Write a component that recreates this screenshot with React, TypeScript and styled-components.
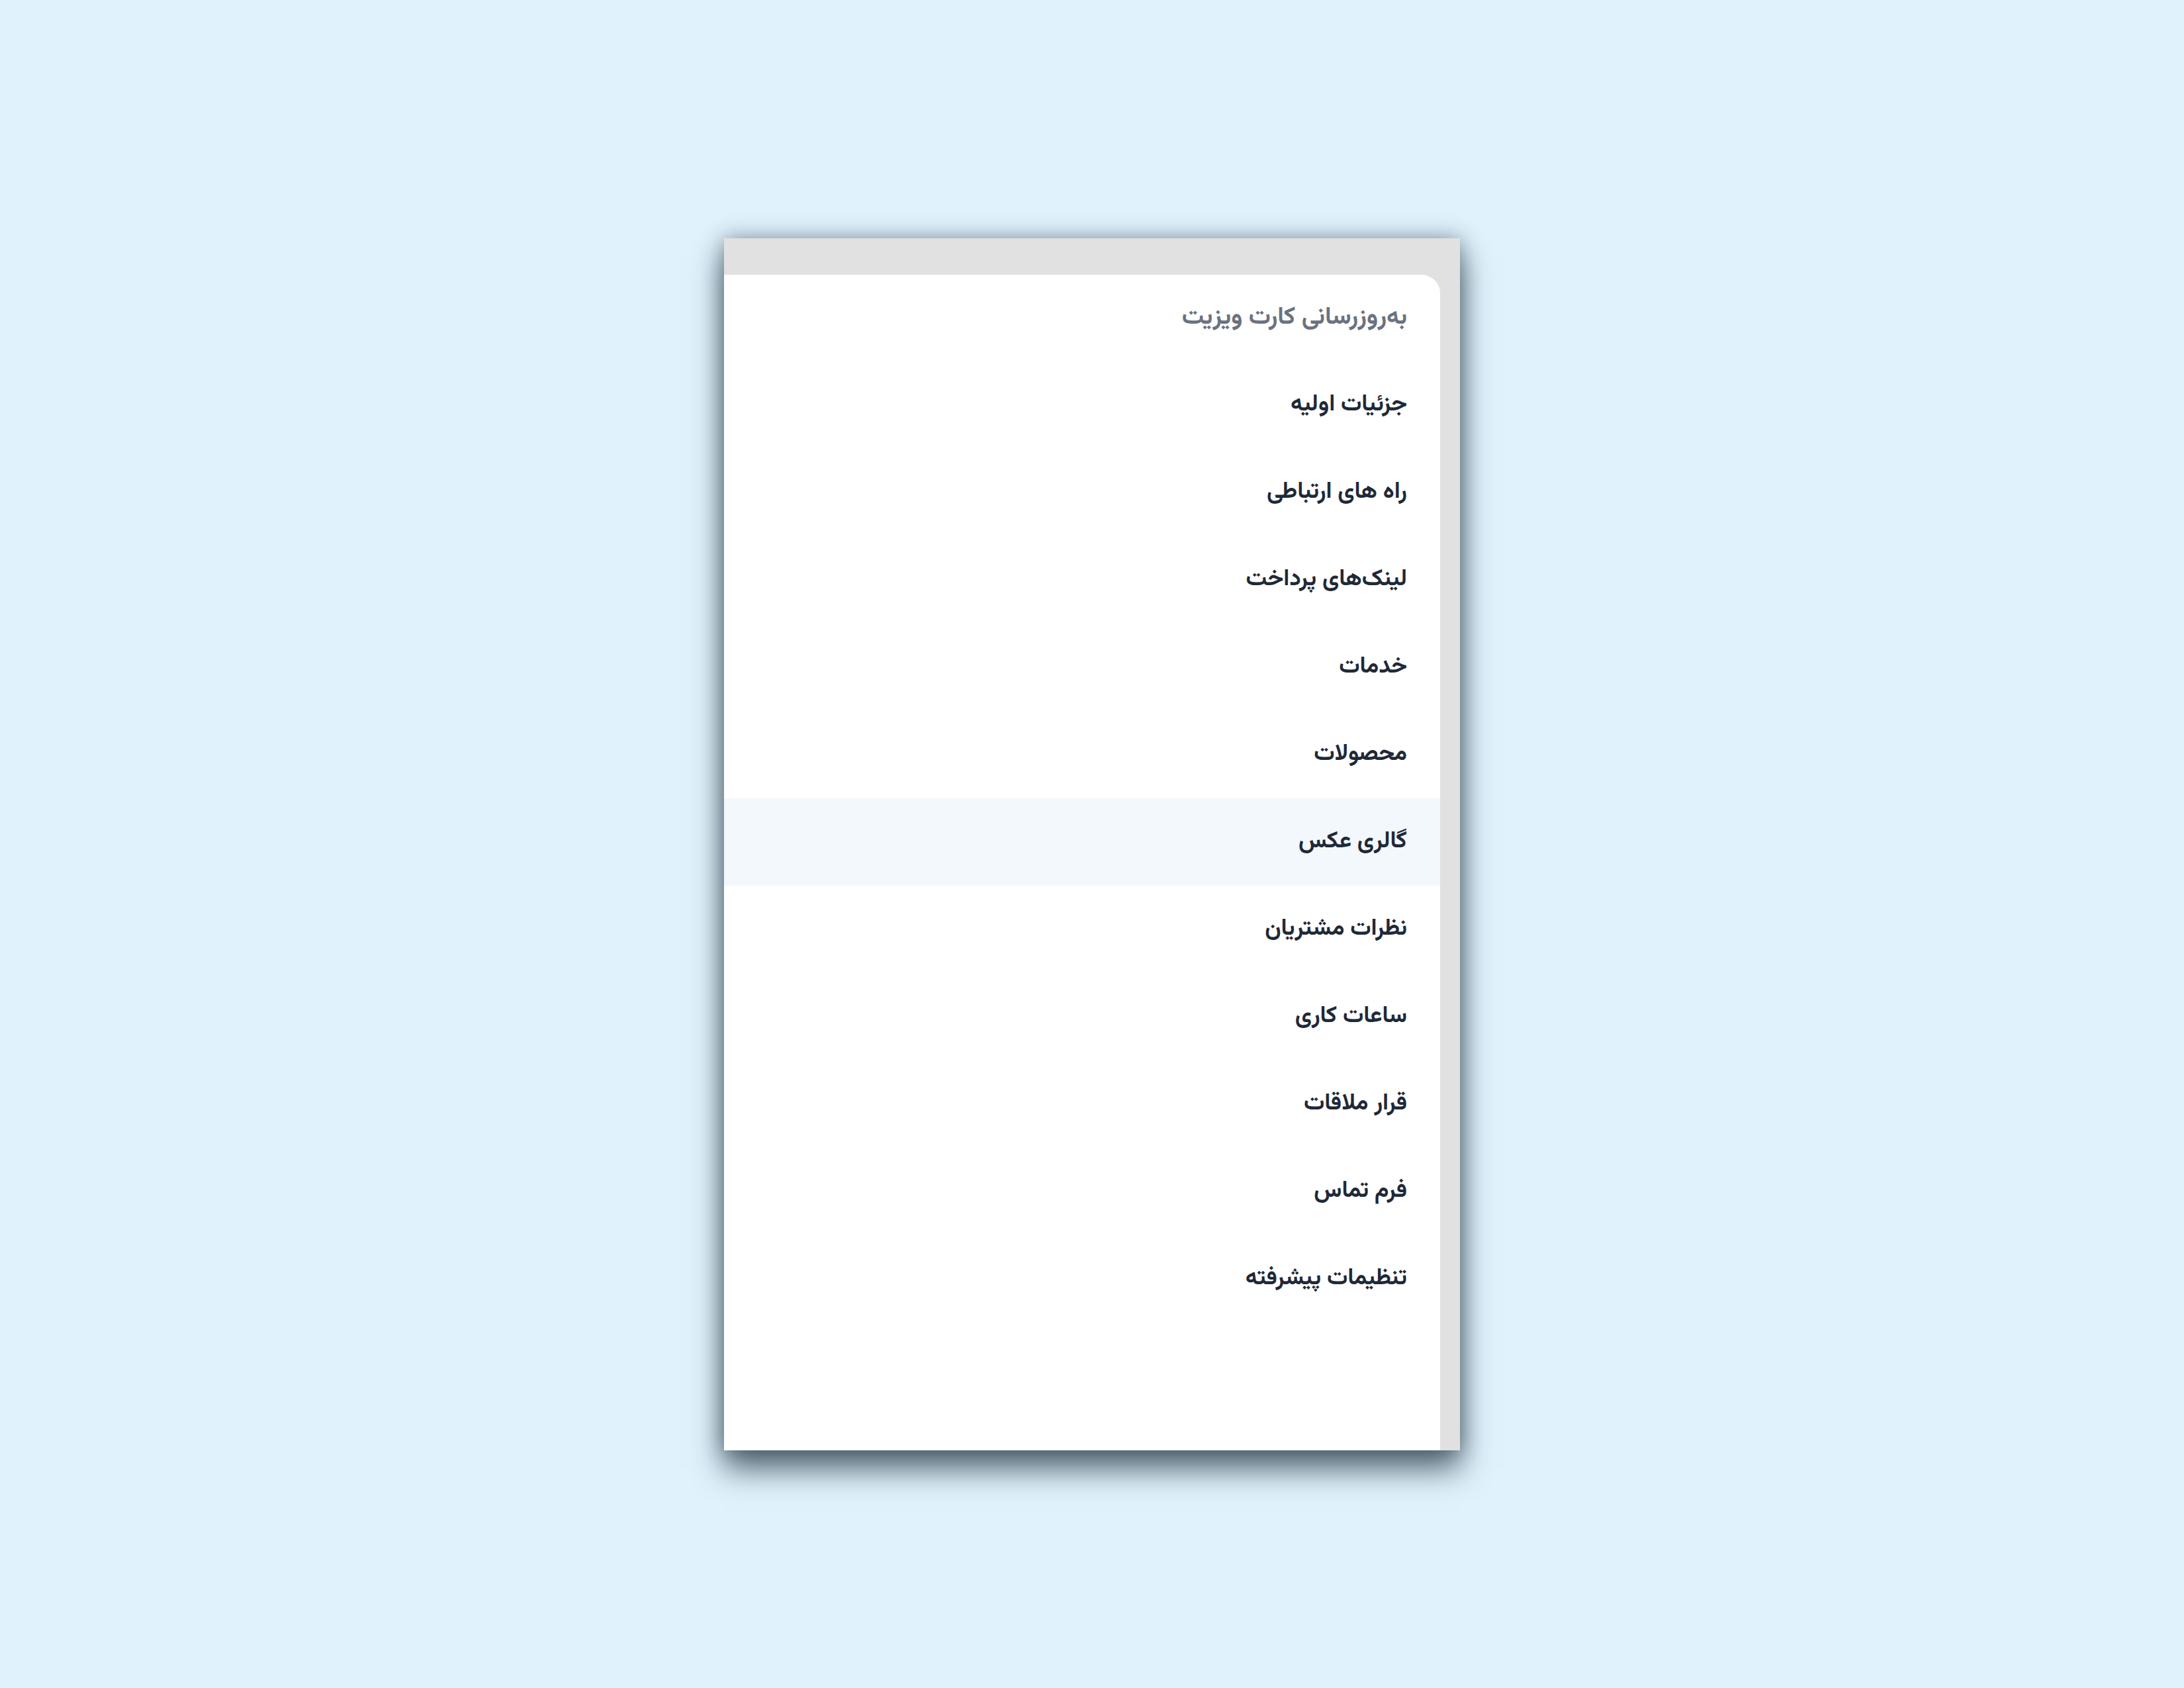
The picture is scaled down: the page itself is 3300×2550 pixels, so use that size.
import { createGlobalStyle } from "styled-components";
import styled from "styled-components";

const GlobalStyle = createGlobalStyle`
  html, body {
    margin: 0;
    padding: 0;
    background: #e0f2fc;
  }
  body {
    font-family: "Vazirmatn", Tahoma, "DejaVu Sans", sans-serif;
  }
`;

const Page = styled.div`
  width: 100vw;
  height: 100vh;
  display: flex;
  align-items: center;
  justify-content: center;
`;

const Frame = styled.div`
  width: 1112px;
  height: 1831px;
  box-sizing: border-box;
  background: #e1e1e1;
  padding-top: 55px;
  padding-right: 30px;
  display: flex;
  flex-direction: column;
  box-shadow: 0 28px 44px rgba(40, 60, 72, 0.75), 0 0 30px rgba(40, 60, 72, 0.45);
`;

const Sheet = styled.nav`
  flex: 1;
  background: #ffffff;
  border-top-right-radius: 28px;
  direction: rtl;
  display: flex;
  flex-direction: column;
`;

const Header = styled.div`
  height: 131px;
  display: flex;
  align-items: center;
  padding-right: 50px;
  font-size: 37px;
  font-weight: 700;
  color: #6b7280;
`;

const Item = styled.a<{ $active?: boolean }>`
  height: 132px;
  display: flex;
  align-items: center;
  padding-right: 50px;
  font-size: 35px;
  font-weight: 700;
  color: #1f2937;
  text-decoration: none;
  background: ${(p) => (p.$active ? "#f3f8fd" : "transparent")};
`;

const items = [
  "جزئیات اولیه",
  "راه های ارتباطی",
  "لینک‌های پرداخت",
  "خدمات",
  "محصولات",
  "گالری عکس",
  "نظرات مشتریان",
  "ساعات کاری",
  "قرار ملاقات",
  "فرم تماس",
  "تنظیمات پیشرفته",
];

export default function App() {
  return (
    <>
      <GlobalStyle />
      <Page>
        <Frame>
          <Sheet>
            <Header>به‌روزرسانی کارت ویزیت</Header>
            {items.map((label) => (
              <Item key={label} $active={label === "گالری عکس"}>
                {label}
              </Item>
            ))}
          </Sheet>
        </Frame>
      </Page>
    </>
  );
}
